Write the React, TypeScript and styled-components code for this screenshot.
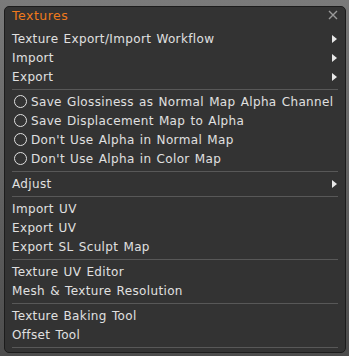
import styled, { createGlobalStyle } from "styled-components";

const GlobalStyle = createGlobalStyle`
  html, body {
    margin: 0;
    padding: 0;
  }
  body {
    width: 349px;
    height: 356px;
    overflow: hidden;
    background: linear-gradient(#7a7a7a, #4c4c4c);
    font-family: "DejaVu Sans", sans-serif;
  }
`;

const Panel = styled.div`
  box-sizing: border-box;
  width: 342px;
  height: 347px;
  margin: 6px 0 0 4px;
  background: #333333;
  border: 1px solid #1c1c1c;
  border-radius: 5px;
  padding: 0 6px 0 7px;
  color: #e0e0e0;
  font-size: 12px;
  letter-spacing: 0.35px;
  word-spacing: 1px;
`;

const Header = styled.div`
  display: flex;
  justify-content: space-between;
  align-items: flex-start;
  height: 22px;
`;

const Title = styled.div`
  color: #f07a1c;
  font-size: 12.5px;
  letter-spacing: 0.5px;
  padding-top: 1px;
`;

const Close = styled.svg`
  width: 10px;
  height: 10px;
  margin: 3px 1px 0 0;
`;

const Row = styled.div<{ $indent?: boolean }>`
  display: flex;
  align-items: center;
  height: 19px;
  gap: 5px;
  padding-left: ${(p) => (p.$indent ? "2px" : "0")};
  white-space: nowrap;
`;

const Label = styled.span`
  flex: 1;
`;

const Arrow = styled.span`
  width: 0;
  height: 0;
  margin-right: 2px;
  border-top: 4px solid transparent;
  border-bottom: 4px solid transparent;
  border-left: 5px solid #e8e8e8;
`;

const Radio = styled.span`
  box-sizing: border-box;
  width: 13px;
  height: 13px;
  margin-right: -1px;
  border: 1.5px solid #e0e0e0;
  border-radius: 50%;
  flex-shrink: 0;
`;

const Separator = styled.div`
  height: 1px;
  background: #585858;
  margin: 3px 1px 2px 0;
`;

type Item = { label: string; sub?: boolean; radio?: boolean };

const groups: Item[][] = [
  [
    { label: "Texture Export/Import Workflow", sub: true },
    { label: "Import", sub: true },
    { label: "Export", sub: true },
  ],
  [
    { label: "Save Glossiness as Normal Map Alpha Channel", radio: true },
    { label: "Save Displacement Map to Alpha", radio: true },
    { label: "Don't Use Alpha in Normal Map", radio: true },
    { label: "Don't Use Alpha in Color Map", radio: true },
  ],
  [{ label: "Adjust", sub: true }],
  [{ label: "Import UV" }, { label: "Export UV" }, { label: "Export SL Sculpt Map" }],
  [{ label: "Texture UV Editor" }, { label: "Mesh & Texture Resolution" }],
  [{ label: "Texture Baking Tool" }, { label: "Offset Tool" }],
];

export default function App() {
  return (
    <>
      <GlobalStyle />
      <Panel>
        <Header>
          <Title>Textures</Title>
          <Close viewBox="0 0 10 10">
            <path d="M1 1L9 9M9 1L1 9" stroke="#9a9a9a" strokeWidth="1.4" />
          </Close>
        </Header>
        {groups.map((g, i) => (
          <div key={i}>
            {g.map((it) => (
              <Row key={it.label} $indent={it.radio}>
                {it.radio && <Radio />}
                <Label>{it.label}</Label>
                {it.sub && <Arrow />}
              </Row>
            ))}
            <Separator />
          </div>
        ))}
      </Panel>
    </>
  );
}
